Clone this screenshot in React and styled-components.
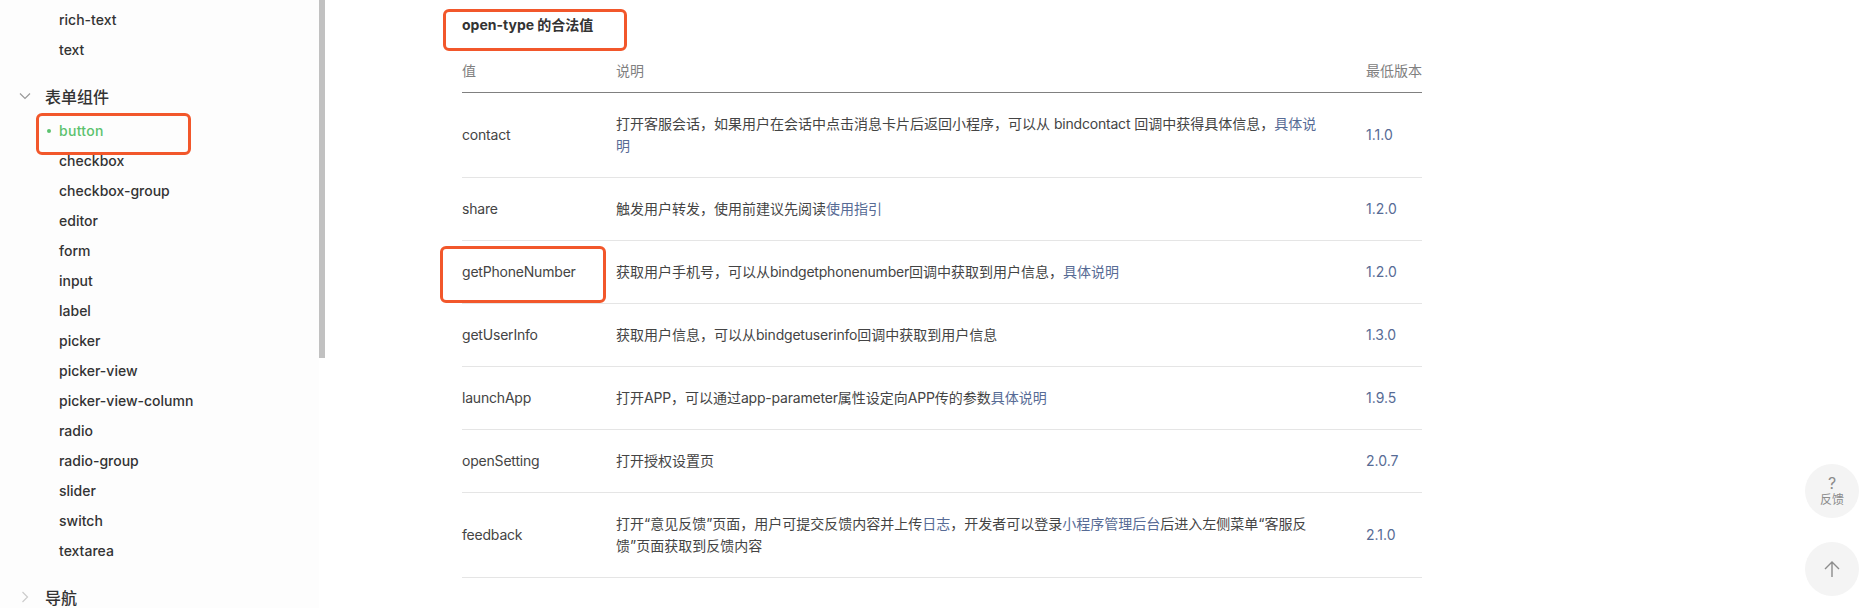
import React from 'react';
import styled, { createGlobalStyle } from 'styled-components';

const Global = createGlobalStyle`
  html, body { margin: 0; padding: 0; background: #fff; }
  body {
    font-family: Inter, "Noto Sans CJK SC", sans-serif;
    font-size: 14px;
    color: #333;
    overflow: hidden;
  }
`;

const Page = styled.div`
  position: relative;
  display: flex;
  width: 1868px;
  height: 608px;
  overflow: hidden;
`;

const Sidebar = styled.nav`
  position: relative;
  flex: none;
  box-sizing: border-box;
  width: 319px;
  height: 608px;
  padding-top: 5px;
  overflow: hidden;
  background: #fdfdfd;
`;

const Scrollbar = styled.div`
  flex: none;
  width: 6px;
  height: 358px;
  background: #c1c1c1;
`;

const Item = styled.div`
  position: relative;
  height: 30px;
  padding-left: 59px;
  line-height: 30px;
  font-weight: 500;
  color: ${p => (p.$active ? '#5cc26e' : '#333')};
  letter-spacing: ${p => (p.$active ? '0.3px' : '0')};
  ${p =>
    p.$active &&
    `&::before {
      content: '';
      position: absolute;
      left: 47px;
      top: 13px;
      width: 4px;
      height: 4px;
      border-radius: 50%;
      background: #5cc26e;
    }`}
`;

const GroupTitle = styled.div`
  display: flex;
  align-items: center;
  height: 34px;
  margin: 14px 0 3px;
  font-size: 16px;
  font-weight: 500;
  color: #333;
`;

const ChevronSlot = styled.span`
  display: flex;
  flex: none;
  justify-content: center;
  width: 45px;
  padding-left: 5px;
  box-sizing: border-box;
`;

const Main = styled.main`
  flex: none;
  width: 960px;
  padding: 14px 0 0 137px;
`;

const Title = styled.h4`
  margin: 0 0 24px;
  font-size: 14px;
  line-height: 22px;
  font-weight: 700;
  color: #333;
`;

const Table = styled.table`
  width: 960px;
  table-layout: fixed;
  border-collapse: separate;
  border-spacing: 0;
`;

const Th = styled.th`
  box-sizing: content-box;
  padding: 0 0 10px;
  font-size: 14px;
  line-height: 22px;
  font-weight: 400;
  text-align: left;
  color: #808080;
  border-bottom: 1px solid #808080;
`;

const Td = styled.td`
  padding: 20px ${p => p.$pr || 0}px 20px 0;
  font-size: 14px;
  line-height: 22px;
  vertical-align: middle;
  color: ${p => (p.$version ? '#576b95' : '#444')};
  border-bottom: 1px solid #e5e5e5;
`;

const Latin = styled.span`
  letter-spacing: -0.2px;
`;

const Link = styled.a`
  color: #576b95;
  text-decoration: none;
`;

const Callout = styled.div`
  position: absolute;
  left: ${p => p.$x}px;
  top: ${p => p.$y}px;
  width: ${p => p.$w}px;
  height: ${p => p.$h}px;
  box-sizing: border-box;
  border: 3px solid #f2572b;
  border-radius: 6px;
  pointer-events: none;
`;

const FloatStack = styled.div`
  position: absolute;
  left: 1805px;
  top: 464px;
  display: flex;
  flex-direction: column;
  gap: 24px;
`;

const FloatButton = styled.button`
  display: flex;
  flex-direction: column;
  align-items: center;
  justify-content: center;
  width: 54px;
  height: 54px;
  padding: 0;
  border: 0;
  border-radius: 50%;
  background: #f4f4f4;
  color: #8c8c8c;
  font-family: inherit;
  font-size: 12px;
  line-height: 16px;
`;

const Question = styled.span`
  font-size: 16px;
  line-height: 18px;
`;

const rows = [
  ['contact', <>打开客服会话，如果用户在会话中点击消息卡片后返回小程序，可以从 <Latin>bindcontact</Latin> 回调中获得具体信息，<Link>具体说明</Link></>, '1.1.0'],
  ['share', <>触发用户转发，使用前建议先阅读<Link>使用指引</Link></>, '1.2.0'],
  ['getPhoneNumber', <>获取用户手机号，可以从<Latin>bindgetphonenumber</Latin>回调中获取到用户信息，<Link>具体说明</Link></>, '1.2.0'],
  ['getUserInfo', <>获取用户信息，可以从<Latin>bindgetuserinfo</Latin>回调中获取到用户信息</>, '1.3.0'],
  ['launchApp', <>打开<Latin>APP</Latin>，可以通过<Latin>app-parameter</Latin>属性设定向<Latin>APP</Latin>传的参数<Link>具体说明</Link></>, '1.9.5'],
  ['openSetting', '打开授权设置页', '2.0.7'],
  ['feedback', <>打开“意见反馈”页面，用户可提交反馈内容并上传<Link>日志</Link>，开发者可以登录<Link>小程序管理后台</Link>后进入左侧菜单“客服反馈”页面获取到反馈内容</>, '2.1.0'],
];

const formItems = ['checkbox', 'checkbox-group', 'editor', 'form', 'input', 'label', 'picker', 'picker-view', 'picker-view-column', 'radio', 'radio-group', 'slider', 'switch', 'textarea'];

export default function App() {
  return (
    <Page>
      <Global />
      <Sidebar>
        <Item>rich-text</Item>
        <Item>text</Item>
        <GroupTitle>
          <ChevronSlot>
            <svg width="12" height="8" viewBox="0 0 12 8" fill="none" stroke="#999" strokeWidth="1.2"><path d="M1 1.5l5 5 5-5" /></svg>
          </ChevronSlot>
          表单组件
        </GroupTitle>
        <Item $active>button</Item>
        {formItems.map(t => <Item key={t}>{t}</Item>)}
        <GroupTitle>
          <ChevronSlot>
            <svg width="8" height="12" viewBox="0 0 8 12" fill="none" stroke="#ccc" strokeWidth="1.2"><path d="M1.5 1l5 5-5 5" /></svg>
          </ChevronSlot>
          导航
        </GroupTitle>
      </Sidebar>
      <Scrollbar />
      <Main>
        <Title>open-type 的合法值</Title>
        <Table>
          <colgroup>
            <col width="154" />
            <col width="750" />
            <col width="56" />
          </colgroup>
          <thead>
            <tr>
              <Th>值</Th>
              <Th>说明</Th>
              <Th>最低版本</Th>
            </tr>
          </thead>
          <tbody>
            {rows.map(([name, desc, version]) => (
              <tr key={name}>
                <Td><Latin>{name}</Latin></Td>
                <Td $pr={46}>{desc}</Td>
                <Td $version>{version}</Td>
              </tr>
            ))}
          </tbody>
        </Table>
      </Main>
      <Callout $x={36} $y={113} $w={155} $h={42} />
      <Callout $x={443} $y={9} $w={184} $h={42} />
      <Callout $x={440} $y={246} $w={166} $h={57} />
      <FloatStack>
        <FloatButton>
          <Question>?</Question>
          <span>反馈</span>
        </FloatButton>
        <FloatButton>
          <svg width="18" height="18" viewBox="0 0 18 18" fill="none" stroke="#8c8c8c" strokeWidth="1.4"><path d="M9 17V2M2 9l7-7 7 7" /></svg>
        </FloatButton>
      </FloatStack>
    </Page>
  );
}
